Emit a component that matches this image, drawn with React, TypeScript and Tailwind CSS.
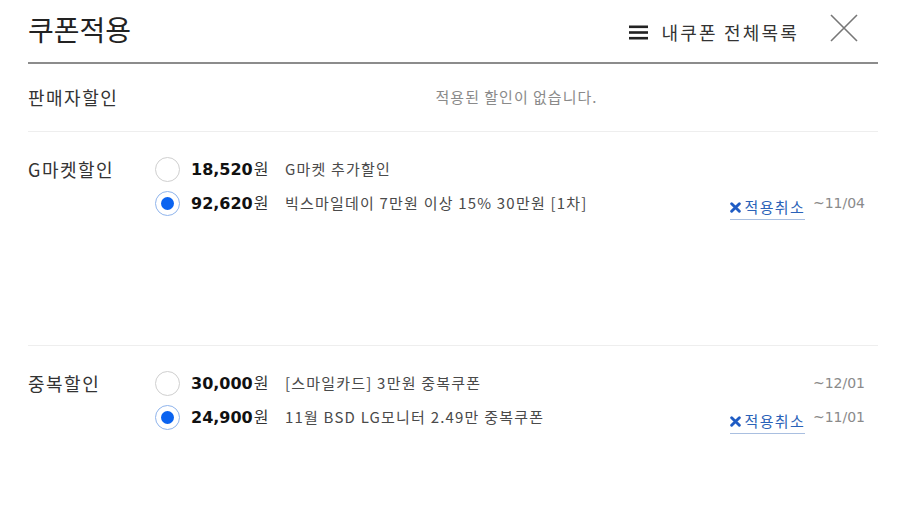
import React from "react";

const KR = { fontFamily: '"Noto Sans CJK KR", "Noto Sans", sans-serif' };
const NUM = { fontFamily: '"DejaVu Sans", "Noto Sans CJK KR", sans-serif' };

function Radio({ checked }: { checked?: boolean }) {
  return checked ? (
    <span className="flex h-[25px] w-[25px] shrink-0 items-center justify-center rounded-full border border-[#8fb4ec] bg-white">
      <span className="h-[13px] w-[13px] rounded-full bg-[#0a63f0]" />
    </span>
  ) : (
    <span className="h-[25px] w-[25px] shrink-0 rounded-full border border-[#cfcfcf] bg-white" />
  );
}

function Cancel() {
  return (
    <span className="flex items-center gap-[4px] border-b border-[#a9bfe0] pb-[1px] text-[15px] leading-[22px] tracking-[1.3px] text-[#2a62b8]">
      <svg width="11" height="11" viewBox="0 0 10 10">
        <path d="M1.5 1.5 L8.5 8.5 M8.5 1.5 L1.5 8.5" stroke="#1f5cc4" strokeWidth="2.6" strokeLinecap="round" />
      </svg>
      <span>적용취소</span>
    </span>
  );
}

type Item = { amount: string; desc: string; checked?: boolean; date?: string; cancel?: boolean };

function Line({ item }: { item: Item }) {
  return (
    <div className="flex h-[26px] items-center">
      <Radio checked={item.checked} />
      <div className="ml-[11px] flex w-[94px] shrink-0 items-baseline">
        <span className="text-[16px] font-bold text-[#111]" style={NUM}>{item.amount}</span>
        <span className="ml-[1px] text-[16px] text-[#333]" style={KR}>원</span>
      </div>
      <span className="flex-1 text-[15px] tracking-[1.2px] text-[#4a4a4a]" style={KR}>{item.desc}</span>
      {item.cancel && <div className="mt-[10px]"><Cancel /></div>}
      <span className="w-[60px] shrink-0 text-right text-[14px] text-[#8a8a8a]" style={NUM}>{item.date ?? ""}</span>
    </div>
  );
}

export default function App() {
  return (
    <div className="h-[511px] w-[900px] bg-white pl-[28px] pr-[22px]" style={KR}>
      <div className="flex h-[64px] items-start border-b-2 border-[#8c8c8c]">
        <h1 className="mt-[10px] text-[28px] leading-[38px] font-normal text-[#222]">쿠폰적용</h1>
        <div className="ml-auto mt-[20px] flex items-center">
          <svg width="19" height="15" viewBox="0 0 19 15" className="mr-[13px]">
            <rect x="0" y="0.5" width="19" height="2.6" fill="#222" />
            <rect x="0" y="6.2" width="19" height="2.6" fill="#222" />
            <rect x="0" y="11.9" width="19" height="2.6" fill="#222" />
          </svg>
          <span className="text-[18px] leading-[24px] tracking-[2.2px] text-[#333]">내쿠폰 전체목록</span>
        </div>
        <svg width="28" height="28" viewBox="0 0 28 28" className="ml-[31px] mr-[20px] mt-[14px]">
          <path d="M1 1 L27 27 M27 1 L1 27" stroke="#777" strokeWidth="1.6" />
        </svg>
      </div>
      <div className="flex h-[68px] items-center border-b border-[#eeeeee]">
        <div className="w-[127px] shrink-0 text-[18px] tracking-[1.5px] text-[#333]">판매자할인</div>
        <div className="flex-1 text-center text-[15px] tracking-[1px] text-[#8a8a8a]">적용된 할인이 없습니다.</div>
      </div>
      <div className="flex h-[214px] border-b border-[#eeeeee] pt-[24px] pr-[13px]">
        <div className="w-[127px] shrink-0 text-[18px] leading-[26px] tracking-[1.5px] text-[#333]">G마켓할인</div>
        <div className="flex flex-1 flex-col gap-[8px]">
          <Line item={{ amount: "18,520", desc: "G마켓 추가할인" }} />
          <Line item={{ amount: "92,620", desc: "빅스마일데이 7만원 이상 15% 30만원 [1차]", checked: true, cancel: true, date: "~11/04" }} />
        </div>
      </div>
      <div className="flex pt-[24px] pr-[13px]">
        <div className="w-[127px] shrink-0 text-[18px] leading-[26px] tracking-[1.5px] text-[#333]">중복할인</div>
        <div className="flex flex-1 flex-col gap-[8px]">
          <Line item={{ amount: "30,000", desc: "[스마일카드] 3만원 중복쿠폰", date: "~12/01" }} />
          <Line item={{ amount: "24,900", desc: "11월 BSD LG모니터 2.49만 중복쿠폰", checked: true, cancel: true, date: "~11/01" }} />
        </div>
      </div>
    </div>
  );
}
